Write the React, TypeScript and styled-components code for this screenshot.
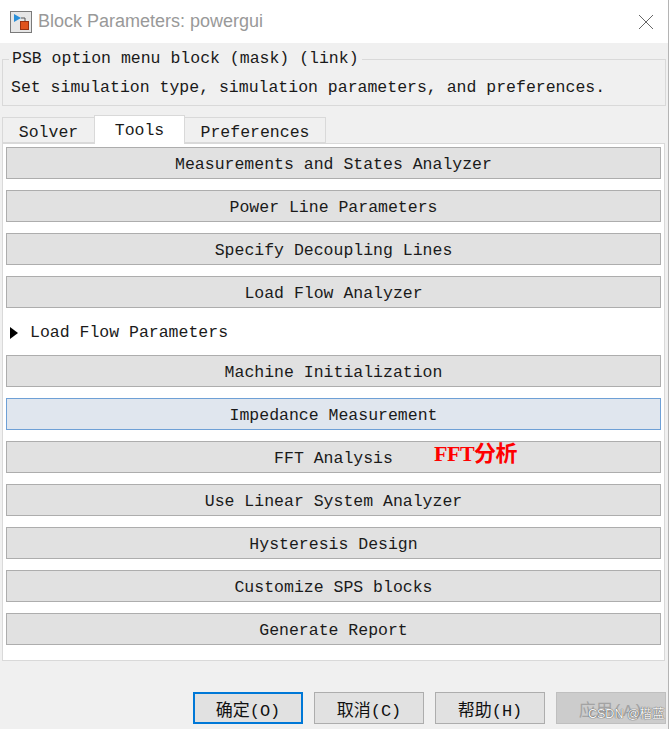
import styled, { createGlobalStyle } from "styled-components";

const GlobalStyle = createGlobalStyle`
  html, body {
    margin: 0;
    padding: 0;
    background: #ffffff;
    overflow: hidden;
  }
`;

const mono = `"Liberation Mono", "Noto Sans CJK SC", monospace`;

const Window = styled.div`
  width: 668px;
  height: 729px;
  border-right: 1px solid #b4b4b4;
  background: #f0f0f0;
  display: flex;
  flex-direction: column;
  font-family: ${mono};
  font-size: 16.5px;
  color: #1a1a1a;
`;

const TitleBar = styled.div`
  height: 43px;
  background: #ffffff;
  display: flex;
  align-items: center;
  padding: 0 14px 0 10px;
  gap: 6px;
`;

const Title = styled.div`
  flex: 1;
  font-family: "Liberation Sans", "Noto Sans", sans-serif;
  font-size: 18px;
  color: #999999;
  padding-bottom: 1px;
`;

const GroupBox = styled.fieldset`
  margin: 6px 2px 0 2px;
  padding: 0 0 7px 8px;
  border: 1px solid #d9d9d9;
  min-width: 0;
`;

const Legend = styled.legend`
  padding: 0 3px;
  margin-left: -2px;
  line-height: 20px;
`;

const Description = styled.div`
  margin-top: 9px;
  line-height: 20px;
`;

const TabRow = styled.div`
  display: flex;
  align-items: flex-end;
  margin: 9px 0 0 3px;
  height: 28px;
  position: relative;
  z-index: 1;
`;

const Tab = styled.div<{ $active?: boolean; $w: number }>`
  box-sizing: border-box;
  width: ${(p) => p.$w}px;
  height: ${(p) => (p.$active ? 29 : 26)}px;
  margin-bottom: ${(p) => (p.$active ? -1 : 0)}px;
  background: ${(p) => (p.$active ? "#ffffff" : "#f0f0f0")};
  border: 1px solid #d9d9d9;
  border-bottom: ${(p) => (p.$active ? "none" : "1px solid #d9d9d9")};
  margin-left: -1px;
  display: flex;
  align-items: center;
  justify-content: center;
  padding-top: ${(p) => (p.$active ? 2 : 5)}px;
  line-height: 20px;
`;

const Panel = styled.div`
  margin: 0 3px 0 2px;
  height: 518px;
  box-sizing: border-box;
  background: #ffffff;
  border: 1px solid #d9d9d9;
  padding: 3px 3px 0 3px;
  display: flex;
  flex-direction: column;
  gap: 11px;
`;

const ToolButton = styled.div<{ $hover?: boolean }>`
  position: relative;
  box-sizing: border-box;
  height: 32px;
  flex: none;
  background: ${(p) => (p.$hover ? "#e0e6ee" : "#e1e1e1")};
  border: 1px solid ${(p) => (p.$hover ? "#6ea0d6" : "#adadad")};
  display: flex;
  align-items: center;
  justify-content: center;
  line-height: 20px;
  padding-top: 3px;
`;

const ExpandRow = styled.div`
  height: 23px;
  flex: none;
  display: flex;
  align-items: center;
  gap: 12px;
  padding-left: 4px;
  padding-top: 2px;
  line-height: 20px;
`;

const Note = styled.span`
  position: absolute;
  left: 427px;
  top: 2px;
  font-family: "Liberation Serif", "Noto Sans CJK SC", serif;
  font-weight: bold;
  font-size: 22px;
  color: #ff0000;
  letter-spacing: -0.5px;
`;

const Footer = styled.div`
  display: flex;
  justify-content: flex-end;
  gap: 11px;
  margin: 31px 2px 0 0;
`;

const DialogButton = styled.div<{ $kind?: "default" | "disabled" }>`
  position: relative;
  box-sizing: border-box;
  width: 110px;
  height: 32px;
  display: flex;
  align-items: center;
  justify-content: center;
  font-size: 17px;
  padding-top: 1px;
  background: ${(p) => (p.$kind === "disabled" ? "#cccccc" : "#e1e1e1")};
  border: ${(p) =>
    p.$kind === "default" ? "2px solid #0078d7" : p.$kind === "disabled" ? "1px solid #bfbfbf" : "1px solid #adadad"};
  color: ${(p) => (p.$kind === "disabled" ? "#a3a3a3" : "#111")};
`;

const Watermark = styled.span`
  position: absolute;
  left: 31px;
  top: 10px;
  font-family: "Liberation Sans", "Noto Sans CJK SC", sans-serif;
  font-size: 12.5px;
  color: #f4f4f4;
  text-shadow: 0 0 1px #555, 0 0 1px #555;
  white-space: nowrap;
`;

const tools = [
  "Measurements and States Analyzer",
  "Power Line Parameters",
  "Specify Decoupling Lines",
  "Load Flow Analyzer",
];

const moreTools = [
  "Machine Initialization",
  "Impedance Measurement",
  "FFT Analysis",
  "Use Linear System Analyzer",
  "Hysteresis Design",
  "Customize SPS blocks",
  "Generate Report",
];

function BlockIcon() {
  return (
    <svg width="22" height="22" viewBox="0 0 22 22">
      <rect x="0.5" y="0.5" width="21" height="21" fill="#e6e6e6" stroke="#7a7a7a" />
      <path d="M4 3 L11 7 L4 11 Z" fill="#2a8fd8" />
      <path d="M11 7 H15 V11" stroke="#555" fill="none" />
      <rect x="10.5" y="10.5" width="8" height="8" fill="#e0521c" stroke="#9a3010" />
    </svg>
  );
}

function CloseIcon() {
  return (
    <svg width="16" height="16" viewBox="0 0 16 16">
      <path d="M1 1 L15 15 M15 1 L1 15" stroke="#666" strokeWidth="1" />
    </svg>
  );
}

function App() {
  return (
    <>
      <GlobalStyle />
      <Window>
        <TitleBar>
          <BlockIcon />
          <Title>Block Parameters: powergui</Title>
          <CloseIcon />
        </TitleBar>
        <GroupBox>
          <Legend>PSB option menu block (mask) (link)</Legend>
          <Description>Set simulation type, simulation parameters, and preferences.</Description>
        </GroupBox>
        <TabRow>
          <Tab $w={93}>Solver</Tab>
          <Tab $w={91} $active>
            Tools
          </Tab>
          <Tab $w={142}>Preferences</Tab>
        </TabRow>
        <Panel>
          {tools.map((t) => (
            <ToolButton key={t}>{t}</ToolButton>
          ))}
          <ExpandRow>
            <svg width="8" height="12" viewBox="0 0 8 12">
              <path d="M0 0 L8 6 L0 12 Z" fill="#000" />
            </svg>
            Load Flow Parameters
          </ExpandRow>
          {moreTools.map((t) => (
            <ToolButton key={t} $hover={t === "Impedance Measurement"}>
              {t}
              {t === "FFT Analysis" && <Note>FFT分析</Note>}
            </ToolButton>
          ))}
        </Panel>
        <Footer>
          <DialogButton $kind="default">确定(O)</DialogButton>
          <DialogButton>取消(C)</DialogButton>
          <DialogButton>帮助(H)</DialogButton>
          <DialogButton $kind="disabled">
            应用(A)
            <Watermark>CSDN @楷蓝</Watermark>
          </DialogButton>
        </Footer>
      </Window>
    </>
  );
}

export default App;
